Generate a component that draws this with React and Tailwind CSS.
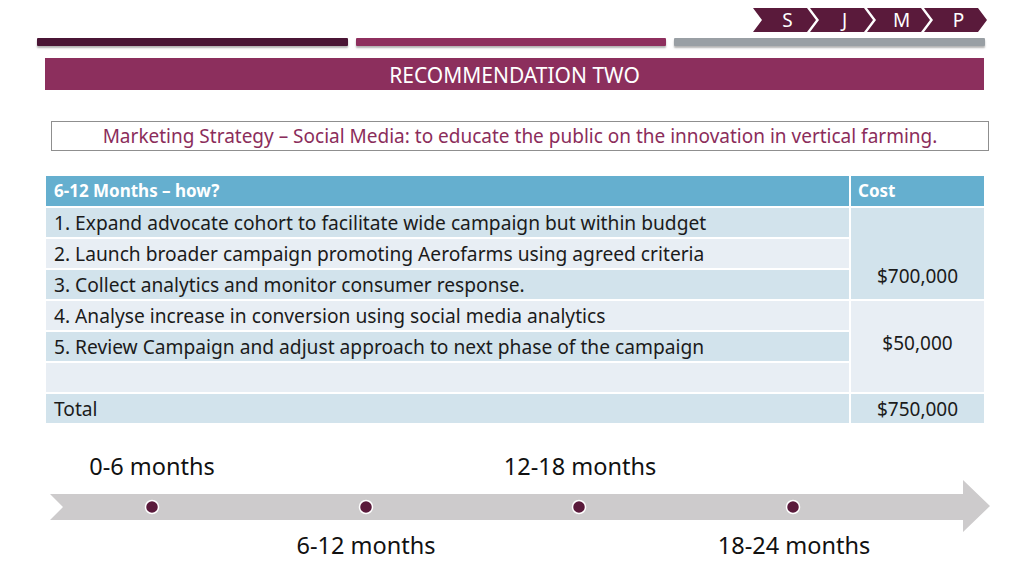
import React from "react";

const rows = [
  "1. Expand advocate cohort to facilitate wide campaign but within budget",
  "2. Launch broader campaign promoting Aerofarms using agreed criteria",
  "3. Collect analytics and monitor consumer response.",
  "4. Analyse increase in conversion using social media analytics",
  "5. Review Campaign and adjust approach to next phase of the campaign",
  "",
];

const dark = "bg-[#d2e3ec]";
const light = "bg-[#e8eef4]";

function Chevron({ label, first }) {
  return (
    <div
      className={`w-[63px] h-[24px] bg-[#5a1a3b] text-white text-[19px] leading-[24px] flex items-center justify-center pl-[6px] [clip-path:polygon(0_0,54px_0,63px_50%,54px_100%,0_100%,9px_50%)] ${
        first ? "" : "-ml-[6px]"
      }`}
    >
      {label}
    </div>
  );
}

export default function App() {
  return (
    <div
      className="w-[1024px] h-[575px] bg-white overflow-hidden text-[#1b1b1b]"
      style={{ fontFamily: '"Noto Sans", "Open Sans", sans-serif' }}
    >
      {/* chevrons */}
      <div className="flex justify-end pr-[37px] pt-[8px]">
        <Chevron label="S" first />
        <Chevron label="J" />
        <Chevron label="M" />
        <Chevron label="P" />
      </div>

      {/* bars */}
      <div className="flex gap-[8px] ml-[37px] mt-[6px]">
        <div className="w-[311px] h-[8px] bg-[#4a1535] rounded-[1px] shadow-[0_2px_2px_rgba(0,0,0,0.3)]" />
        <div className="w-[310px] h-[8px] bg-[#8e2f5e] rounded-[1px] shadow-[0_2px_2px_rgba(0,0,0,0.3)]" />
        <div className="w-[311px] h-[8px] bg-[#999fa4] rounded-[1px] shadow-[0_2px_2px_rgba(0,0,0,0.3)]" />
      </div>

      {/* title */}
      <div className="ml-[45px] mt-[12px] w-[939px] h-[32px] bg-[#8c2f5d] flex items-center justify-center pt-[3px] text-white text-[21px]">
        RECOMMENDATION TWO
      </div>

      {/* strategy box */}
      <div className="ml-[51px] mt-[31px] w-[938px] h-[30px] border border-[#8f8f8f] flex items-center justify-center pt-[1px] text-[#8b2d5b] text-[19px]">
        Marketing Strategy – Social Media: to educate the public on the innovation in vertical farming.
      </div>

      {/* table */}
      <div className="ml-[46px] mt-[25px] w-[938px] grid grid-cols-[803px_133px] grid-rows-[30px_repeat(7,29px)] gap-[2px] bg-white">
        <div className="bg-[#65afcf] text-white font-bold text-[17px] flex items-center pl-[8px]">
          6-12 Months – how?
        </div>
        <div className="bg-[#65afcf] text-white font-bold text-[17px] flex items-center pl-[7px]">
          Cost
        </div>

        {rows.map((r, i) => (
          <div
            key={i}
            className={`${i % 2 === 0 ? dark : light} text-[19.2px] flex items-center pl-[8px] pt-[2px] col-start-1`}
            style={{ gridRowStart: i + 2 }}
          >
            {r}
          </div>
        ))}

        <div className={`${dark} col-start-2 row-start-2 row-span-3 flex justify-center pt-[55px] text-[19px] leading-[26px]`}>
          $700,000
        </div>
        <div className={`${light} col-start-2 row-start-5 row-span-3 flex justify-center pt-[29px] text-[19px] leading-[26px]`}>
          $50,000
        </div>

        <div className={`${dark} col-start-1 row-start-8 text-[19.2px] flex items-center pl-[8px] pt-[2px]`}>
          Total
        </div>
        <div className={`${dark} col-start-2 row-start-8 text-[19px] flex items-center justify-center pt-[2px]`}>
          $750,000
        </div>
      </div>

      {/* timeline */}
      <div className="ml-[45px] mt-[30px] grid grid-cols-[repeat(4,214px)] h-[27px] text-[23.5px] leading-[27px] text-[#111]">
        <div className="text-center">0-6 months</div>
        <div />
        <div className="text-center">12-18 months</div>
        <div />
      </div>
      <div className="ml-[50px]">
        <svg width="940" height="52" viewBox="0 0 940 52" className="block">
          <polygon
            points="0,14 913,14 913,0 940,26 913,52 913,40 0,40 13,27"
            fill="#cdcbcc"
          />
          {[102, 316, 529, 743].map((x) => (
            <circle key={x} cx={x} cy={27} r={6.5} fill="#5a1a3b" stroke="#ffffff" strokeWidth={1.5} />
          ))}
        </svg>
      </div>
      <div className="ml-[45px] grid grid-cols-[repeat(4,214px)] h-[26px] text-[23.5px] leading-[26px] text-[#111]">
        <div />
        <div className="text-center">6-12 months</div>
        <div />
        <div className="text-center">18-24 months</div>
      </div>
    </div>
  );
}
